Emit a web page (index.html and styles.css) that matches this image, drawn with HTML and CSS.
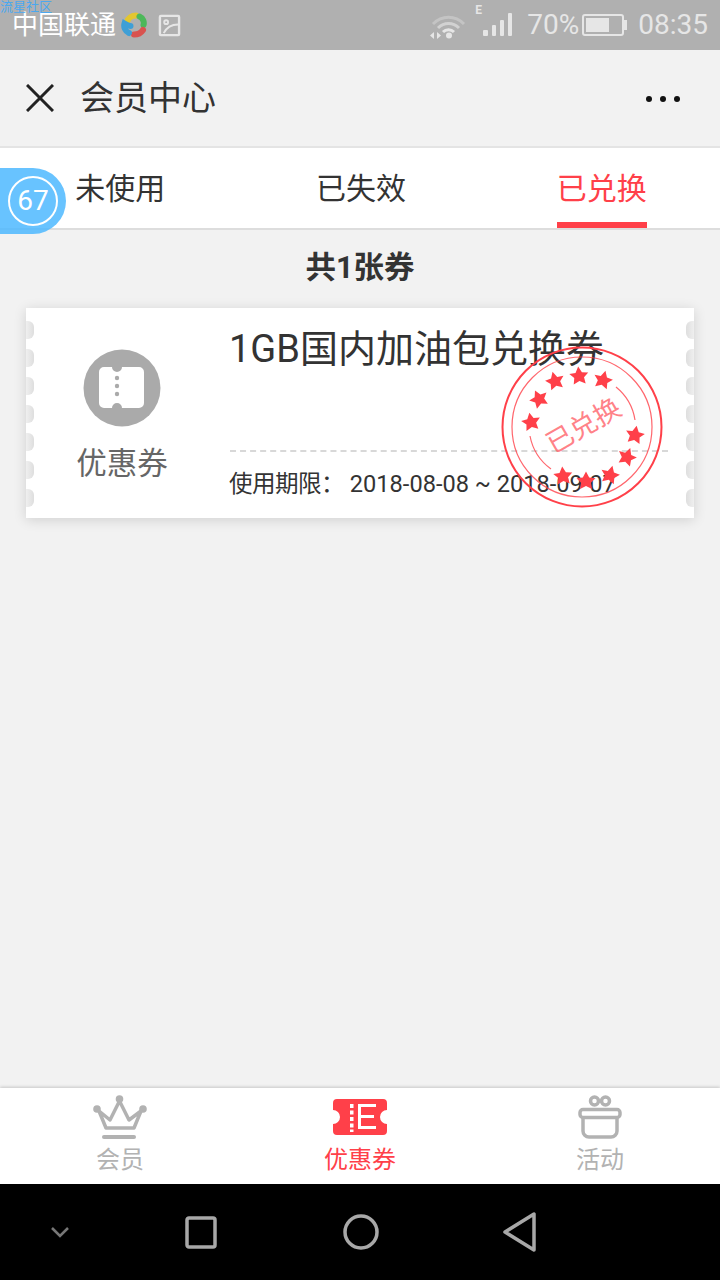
FILE: index.html
```html
<!DOCTYPE html>
<html lang="zh-CN">
<head>
	<meta charset="UTF-8">
	<title>会员中心</title>
	<link rel="stylesheet" href="styles.css">
</head>
<body>
	<div class="page">
		<span class="watermark">流星社区</span>

		<!-- status bar -->
		<div class="statusBar">
			<div class="sLeft">
				<span class="carrier">中国联通</span>
				<svg class="appLogo" width="26" height="26" viewBox="0 0 26 26" fill="none" stroke-width="6" stroke-linecap="round">
					<path d="M6 10C7 6 11 3.500 15 3.500" stroke="#e3c62f"/>
					<path d="M18.500 4.500C22 6 23.500 10 22.500 13" stroke="#4cb85a"/>
					<path d="M22 18C20 21 17 22.500 13 22.500" stroke="#d9534f"/>
					<path d="M8 21C4 19 2.500 15 3.500 11.500C6 13 8 14 9.500 14" stroke="#3f9fd6"/>
				</svg>
				<svg class="picIcon" width="23" height="23" viewBox="0 0 24 24" fill="none" stroke="#e6e6e6" stroke-width="2.500">
					<rect x="2" y="2" width="20" height="20" rx="1"/>
					<circle cx="8.500" cy="8.500" r="2" stroke-width="2"/>
					<path d="M6 20C9 14 14 11 21 11" stroke-width="2"/>
				</svg>
			</div>
			<div class="sRight">
				<svg class="wifi" width="40" height="26" viewBox="0 0 38 26" fill="none">
					<path d="M4 11C13 2 26 2 35 11" stroke="#c4c4c4" stroke-width="3"/>
					<path d="M9 15C15 9 24 9 30 15" stroke="#d2d2d2" stroke-width="3"/>
					<path d="M14 19C17 16 22 16 25 19" stroke="#e6e6e6" stroke-width="3"/>
					<circle cx="20" cy="22.500" r="3" fill="#e6e6e6"/>
					<path d="M5 19V26L1 22.500ZM8 19V26L12 22.500Z" fill="#e6e6e6"/>
				</svg>
				<div class="signal">
					<span class="netType">E</span>
					<svg width="30" height="26" viewBox="0 0 30 26" fill="#e6e6e6">
						<rect x="1" y="18" width="5" height="6" rx="1"/>
						<rect x="10" y="13" width="4" height="11" rx="1"/>
						<rect x="18" y="8" width="4" height="16" rx="1"/>
						<rect x="26" y="1" width="4" height="23" rx="1"/>
					</svg>
				</div>
				<span class="sText pct">70%</span>
				<div class="battery"><div class="batteryFill"></div></div>
				<span class="sText">08:35</span>
			</div>
		</div>

		<!-- header -->
		<div class="header">
			<div class="hLeft">
				<svg width="28" height="28" viewBox="0 0 28 28" stroke="#222" stroke-width="3" fill="none">
					<path d="M1 1L27 27M27 1L1 27"/>
				</svg>
				<span class="hTitle">会员中心</span>
			</div>
			<div class="dots"><i></i><i></i><i></i></div>
		</div>

		<!-- tabs -->
		<div class="tabs">
			<div class="tab"><span>未使用</span></div>
			<div class="tab"><span>已失效</span></div>
			<div class="tab active"><span>已兑换</span></div>
		</div>

		<div class="floatBall"><span>67</span></div>

		<div class="main">
			<p class="total">共1张券</p>

			<div class="card">
				<div class="edge left"><i></i><i></i><i></i><i></i><i></i><i></i><i></i></div>
				<div class="cLeft">
					<svg width="78" height="78" viewBox="0 0 78 78">
						<circle cx="39" cy="39" r="38.500" fill="#aaa"/>
						<path d="M21 18H29A5 5 0 0 0 39 18H56A5 5 0 0 1 61 23V54A5 5 0 0 1 56 59H39A5 5 0 0 0 29 59H21A5 5 0 0 1 16 54V23A5 5 0 0 1 21 18Z" fill="#fff"/>
						<g fill="#aaa">
							<circle cx="34" cy="29" r="2.200"/>
							<circle cx="34" cy="37" r="2.200"/>
							<circle cx="34" cy="45" r="2.200"/>
						</g>
					</svg>
					<span class="cName">优惠券</span>
				</div>
				<div class="cRight">
					<p class="cTitle">1GB国内加油包兑换券</p>
					<p class="cDate"><span class="cLabel">使用期限：</span> 2018-08-08 ~ 2018-09-07</p>
				</div>
				<div class="edge right"><i></i><i></i><i></i><i></i><i></i><i></i><i></i></div>

				<svg class="stamp" width="164" height="164" viewBox="-82 -82 164 164" fill="none" stroke="#ff4049">
					<defs>
						<polygon id="star" points="0,-9.500 3.200,-3.400 9.500,-2.800 4.900,1.700 6,8 0,5 -6,8 -4.900,1.700 -9.500,-2.800 -3.200,-3.400" fill="#ff4049" stroke="none"/>
					</defs>
					<circle r="79.500" stroke-width="2"/>
					<circle r="70" stroke-width="1.200" opacity=".8"/>
					<path d="M34 -40A53 53 0 0 1 53 -7" stroke-width="1.200" opacity=".8"/>
					<path d="M-52 9A53 53 0 0 0 -31 42" stroke-width="1.200" opacity=".8"/>
					<use href="#star" transform="translate(-3 -51) rotate(-5)"/>
					<use href="#star" transform="translate(21 -47) rotate(15)"/>
					<use href="#star" transform="translate(-27 -46) rotate(-15)"/>
					<use href="#star" transform="translate(-43 -28) rotate(-25)"/>
					<use href="#star" transform="translate(-51 -5) rotate(-10)"/>
					<use href="#star" transform="translate(53 8) rotate(10)"/>
					<use href="#star" transform="translate(45 30) rotate(20)"/>
					<use href="#star" transform="translate(28 48) rotate(15)"/>
					<use href="#star" transform="translate(4 54)"/>
					<use href="#star" transform="translate(-19 49) rotate(-5)"/>
					<text class="stampText" x="2" y="9" text-anchor="middle" transform="rotate(-30)">已兑换</text>
				</svg>
			</div>
		</div>

		<!-- bottom tab bar -->
		<div class="tabBar">
			<div class="tbItem">
				<svg width="54" height="44" viewBox="0 0 54 44" fill="#b2b2b2">
					<circle cx="4" cy="14" r="3.800"/>
					<circle cx="26.500" cy="4" r="3.800"/>
					<circle cx="50" cy="14" r="3.800"/>
					<path d="M6 16L13 33H41L48 16L36 25L26.500 6L17 25Z" fill="none" stroke="#b2b2b2" stroke-width="3.500" stroke-linejoin="round"/>
					<rect x="9" y="40" width="34" height="4" rx="2"/>
				</svg>
				<span>会员</span>
			</div>
			<div class="tbItem on">
				<svg width="54" height="44" viewBox="0 0 54 44">
					<path d="M4 4H50A4 4 0 0 1 54 8V15A7 7 0 0 0 54 29V36A4 4 0 0 1 50 40H4A4 4 0 0 1 0 36V29A7 7 0 0 0 0 15V8A4 4 0 0 1 4 4Z" fill="#ff4049"/>
					<path d="M17 9H20.500V13H17ZM17 15.500H20.500V19.500H17ZM17 22H20.500V26H17ZM17 28.500H20.500V32.500H17ZM17 34.500H20.500V37H17Z" fill="#fff"/>
					<path d="M25 9H43V12H25ZM25 9H28V34H25ZM28 20H41V23H28ZM25 31H43V34H25Z" fill="#fff"/>
				</svg>
				<span>优惠券</span>
			</div>
			<div class="tbItem">
				<svg width="44" height="44" viewBox="0 0 44 44" fill="none" stroke="#b2b2b2" stroke-width="3.500">
					<circle cx="16.500" cy="6" r="4"/>
					<circle cx="27.500" cy="6" r="4"/>
					<rect x="2" y="14.500" width="40" height="8" rx="3"/>
					<path d="M5 22V36A6 6 0 0 0 11 42H33A6 6 0 0 0 39 36V22"/>
				</svg>
				<span>活动</span>
			</div>
		</div>

		<!-- android nav -->
		<div class="navBar">
			<svg width="18" height="12" viewBox="0 0 18 12" fill="none" stroke="#777" stroke-width="2.500"><path d="M1 2L9 10L17 2"/></svg>
			<svg width="32" height="33" viewBox="0 0 32 33" fill="none" stroke="#a8a8a8" stroke-width="3.500"><rect x="2" y="2" width="28" height="29" rx="2"/></svg>
			<svg width="36" height="36" viewBox="0 0 36 36" fill="none" stroke="#a8a8a8" stroke-width="3.500"><circle cx="18" cy="18" r="16"/></svg>
			<svg width="34" height="40" viewBox="0 0 34 40" fill="none" stroke="#a8a8a8" stroke-width="3.500" stroke-linejoin="round"><path d="M31 2V38L2 20Z"/></svg>
		</div>
	</div>
</body>
</html>
```

FILE: styles.css
```css
*{
	margin: 0px;
	padding: 0px;
	box-sizing: border-box;
}

body{
	font-family: Roboto, "Noto Sans CJK SC", sans-serif;
	background: #f2f2f2;
}

.page{
	position: relative;
	display: flex;
	flex-direction: column;
	width: 720px;
	height: 1280px;
	overflow: hidden;
}

.watermark{
	position: absolute;
	left: 0px;
	top: 0px;
	font-size: 13px;
	line-height: 13px;
	color: #4aa8f0;
	z-index: 3;
}

/* status bar */
.statusBar{
	display: flex;
	justify-content: space-between;
	align-items: center;
	flex: none;
	height: 50px;
	padding: 0px 12px 0px 12px;
	background: #b0b0b0;
	color: #e6e6e6;
}

.sLeft,
.sRight{
	display: flex;
	align-items: center;
}

.carrier{
	font-size: 26px;
	line-height: 48px;
	color: #fff;
}

.appLogo{
	margin-left: 5px;
}

.picIcon{
	margin-left: 11px;
}

.wifi{
	margin-top: 2px;
}

.signal{
	position: relative;
	margin-left: 14px;
}

.signal svg{
	display: block;
}

.netType{
	position: absolute;
	left: -7px;
	top: -8px;
	font-size: 12px;
	font-weight: bold;
	line-height: 12px;
}

.sText{
	font-size: 28px;
	line-height: 50px;
}

.pct{
	margin-left: 15px;
}

.battery{
	position: relative;
	width: 42px;
	height: 22px;
	margin: 0px 14px 0px 3px;
	padding: 2px;
	border: 2px solid #e6e6e6;
	border-radius: 3px;
}

.battery:after{
	content: '';
	position: absolute;
	right: -5px;
	top: 4px;
	width: 3px;
	height: 10px;
	background: #e6e6e6;
}

.batteryFill{
	width: 68%;
	height: 100%;
	background: #e6e6e6;
}

/* header */
.header{
	display: flex;
	justify-content: space-between;
	align-items: center;
	flex: none;
	height: 96px;
	padding: 0px 40px 0px 26px;
	background: #f2f2f2;
}

.hLeft{
	display: flex;
	align-items: center;
}

.hTitle{
	margin: -6px 0px 0px 26px;
	font-size: 34px;
	color: #333;
}

.dots{
	display: flex;
	gap: 8px;
	margin-top: 2px;
}

.dots i{
	width: 6px;
	height: 6px;
	border-radius: 50%;
	background: #111;
}

/* tabs */
.tabs{
	display: flex;
	flex: none;
	height: 84px;
	margin-right: -2px;
	background: #fff;
	border-top: 2px solid #e4e4e4;
	border-bottom: 2px solid #ddd;
}

.tab{
	display: flex;
	justify-content: center;
	flex: 1;
}

.tab span{
	height: 80px;
	font-size: 30px;
	line-height: 82px;
	color: #333;
}

.tab.active span{
	color: #ff4049;
	border-bottom: 6px solid #ff4049;
}

.floatBall{
	position: absolute;
	left: 0px;
	top: 168px;
	width: 66px;
	height: 66px;
	padding: 8px;
	background: rgba(77,184,255,.85);
	border-radius: 0px 33px 33px 0px;
	z-index: 2;
}

.floatBall span{
	display: block;
	width: 50px;
	height: 50px;
	border: 2px solid #fff;
	border-radius: 50%;
	font-size: 28px;
	line-height: 46px;
	text-align: center;
	color: #fff;
}

/* list */
.main{
	flex: 1;
	padding: 0px 26px;
}

.total{
	height: 78px;
	font-size: 30.500px;
	font-weight: bold;
	line-height: 76px;
	text-align: center;
	color: #333;
}

.card{
	position: relative;
	display: flex;
	height: 210px;
	background: #fff;
	box-shadow: 0px 2px 12px rgba(0,0,0,.14);
}

.edge{
	display: flex;
	flex-direction: column;
	gap: 10px;
	flex: none;
	width: 8px;
	padding-top: 13px;
}

.edge i{
	height: 18px;
}

.edge.left i{
	background: linear-gradient(to right, #efefef, #dedede);
	border-radius: 0px 6px 6px 0px;
}

.edge.right{
	margin-left: 18px;
}

.edge.right i{
	background: linear-gradient(to left, #efefef, #dedede);
	border-radius: 6px 0px 0px 6px;
}

.cLeft{
	display: flex;
	flex-direction: column;
	align-items: center;
	flex: none;
	width: 176px;
	padding-top: 41px;
}

.cName{
	margin-top: 15px;
	font-size: 30.500px;
	line-height: 44px;
	color: #666;
}

.cRight{
	display: flex;
	flex-direction: column;
	justify-content: space-between;
	width: 438px;
	margin-left: 20px;
	padding-top: 21px;
}

.cTitle{
	font-size: 38px;
	line-height: 40px;
	text-indent: -1px;
	white-space: nowrap;
	color: #333;
}

.cDate{
	height: 68px;
	border-top: 2px dashed #d8d8d8;
	font-size: 23.600px;
	line-height: 64px;
	text-indent: -1px;
	white-space: nowrap;
	color: #333;
}

.cLabel{
	letter-spacing: -0.600px;
}

.stamp{
	position: absolute;
	left: 474px;
	top: 37px;
}

.stampText{
	font-size: 27px;
	fill: #ff4049;
	stroke: none;
	opacity: .65;
}

/* bottom tabs */
.tabBar{
	display: flex;
	flex: none;
	height: 96px;
	background: #fff;
	box-shadow: 0px -1px 3px rgba(0,0,0,.18);
}

.tbItem{
	display: flex;
	flex-direction: column;
	align-items: center;
	flex: 1;
	padding-top: 7px;
	font-size: 24px;
	line-height: 42px;
	color: #b2b2b2;
}

.tbItem.on{
	color: #ff4049;
}

/* android nav */
.navBar{
	display: grid;
	grid-template-columns: 120px 162px 158px 160px;
	justify-items: center;
	align-items: center;
	flex: none;
	height: 96px;
	background: #000;
}
```
